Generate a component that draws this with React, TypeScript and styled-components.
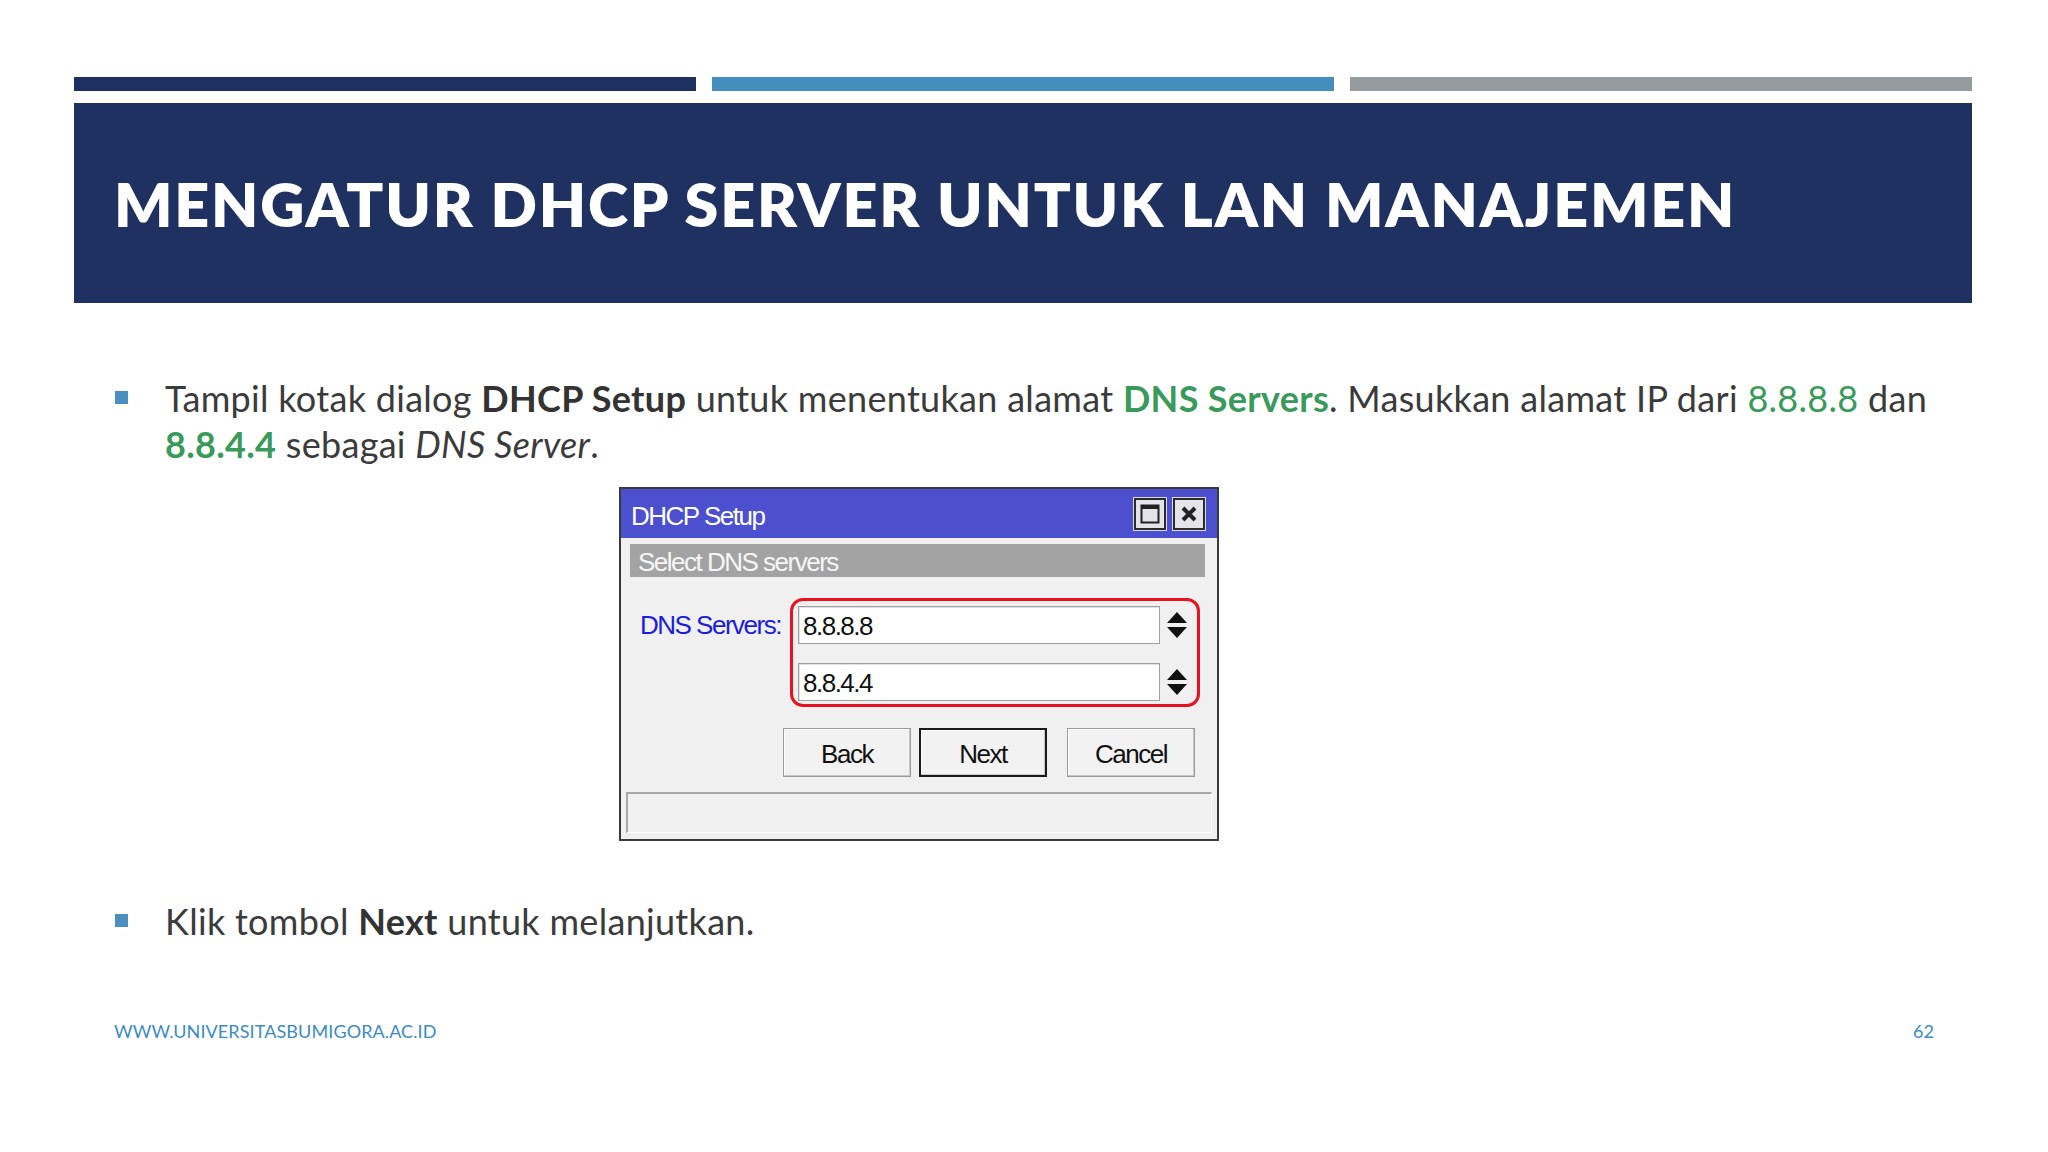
import React from 'react';
import styled, { createGlobalStyle } from 'styled-components';

const GlobalStyle = createGlobalStyle`
    html, body {
        margin: 0;
        padding: 0;
        background: #ffffff;
    }
    body {
        font-family: 'Lato', 'Open Sans', sans-serif;
    }
`;

const Slide = styled.div`
    width: 2048px;
    height: 1152px;
    box-sizing: border-box;
    padding: 77px 76px 0 74px;
    background: #ffffff;
    overflow: hidden;
`;

const AccentBars = styled.div`
    display: grid;
    grid-template-columns: 1fr 1fr 1fr;
    column-gap: 16px;
`;

const AccentBar = styled.div<{ $color: string }>`
    height: 14px;
    background: ${p => p.$color};
`;

const Header = styled.header`
    margin-top: 12px;
    height: 200px;
    background: #1e3160;
    display: flex;
    align-items: center;
    padding-left: 40px;

    h1 {
        margin: 0;
        color: #ffffff;
        font-family: 'Lato', sans-serif;
        font-weight: 800;
        font-size: 61px;
        letter-spacing: 1.8px;
        line-height: 1;
        white-space: nowrap;
    }
`;

const Content = styled.div`
    margin-top: 72px;
    padding-left: 41px;
`;

const Bullet = styled.div<{ $gap?: number }>`
    display: grid;
    grid-template-columns: 50px 1fr;
    margin-top: ${p => p.$gap || 0}px;
    font-size: 36px;
    line-height: 46px;
    letter-spacing: 0.3px;
    color: #3b3b3b;

    &::before {
        content: '';
        width: 13px;
        height: 13px;
        margin-top: 16px;
        background: #4a8fc0;
    }

    p {
        margin: 0;
        max-width: 1800px;
    }

    b {
        font-weight: 700;
        color: #333333;
    }
`;

const Green = styled.span<{ $bold?: boolean }>`
    color: #3a9a5c;
    font-weight: ${p => (p.$bold ? 700 : 400)};
`;

const Dialog = styled.div`
    margin: 20px 0 0 504px;
    width: 600px;
    border: 2px solid #3a3a3a;
    background: #f0f0f0;
    font-family: 'Liberation Sans', Arial, sans-serif;
    font-size: 26px;
    letter-spacing: -1.5px;
    box-sizing: border-box;
    white-space: nowrap;
`;

const TitleBar = styled.div`
    height: 49px;
    background: #4c4fce;
    display: flex;
    align-items: center;
    justify-content: space-between;
    padding: 0 12px 0 10px;
    color: #ffffff;

    span {
        padding-top: 5px;
    }
`;

const WinButtons = styled.div`
    display: flex;
    gap: 7px;
`;

const WinButton = styled.div`
    width: 28px;
    height: 28px;
    background: #e4e4e8;
    border: 2px solid #2b2b2b;
    box-shadow: 0 0 0 1px #d8d8ff;
    display: flex;
    align-items: center;
    justify-content: center;
`;

const Body = styled.div`
    padding: 6px 5px 6px 5px;
`;

const SectionBar = styled.div`
    margin: 0 7px 0 4px;
    height: 33px;
    background: #a3a3a3;
    color: #f6f6f6;
    line-height: 37px;
    padding-left: 8px;
`;

const FieldRow = styled.div`
    margin-top: 21px;
    display: flex;
    padding-left: 14px;
`;

const FieldLabel = styled.div`
    width: 150px;
    color: #1c1ce0;
    line-height: 38px;
    margin-top: 8px;
`;

const Highlight = styled.div`
    width: 410px;
    box-sizing: border-box;
    border: 3px solid #e8121e;
    border-radius: 13px;
    padding: 5px 4px 3px 5px;
    display: grid;
    row-gap: 19px;
`;

const InputRow = styled.div`
    display: flex;
    align-items: center;
`;

const TextBox = styled.div`
    width: 362px;
    height: 38px;
    box-sizing: border-box;
    background: #ffffff;
    border: 1px solid #a0a0a0;
    box-shadow: inset 1px 1px 0 #e2e2e2;
    line-height: 38px;
    padding-left: 4px;
    color: #111111;
`;

const Spinner = styled.svg`
    margin-left: 6px;
`;

const ButtonRow = styled.div`
    margin-top: 21px;
    display: flex;
    justify-content: flex-end;
    padding-right: 17px;
`;

const DialogButton = styled.div<{ $default?: boolean; $spaced?: boolean }>`
    width: 128px;
    height: 49px;
    box-sizing: border-box;
    margin-left: ${p => (p.$spaced ? 20 : 8)}px;
    background: #f2f2f2;
    border: ${p => (p.$default ? '2px solid #1a1a1a' : '1px solid #9a9a9a')};
    box-shadow: inset -1px -1px 0 #c8c8c8, inset 1px 1px 0 #ffffff;
    display: flex;
    align-items: center;
    justify-content: center;
    padding-top: 3px;
    color: #111111;
`;

const StatusBar = styled.div`
    margin-top: 15px;
    height: 41px;
    box-sizing: border-box;
    border-top: 2px solid #a8a8a8;
    border-left: 2px solid #a8a8a8;
    border-bottom: 1px solid #ffffff;
    border-right: 1px solid #ffffff;
    background: #f0f0f0;
`;

const Footer = styled.footer`
    margin-top: 77px;
    display: flex;
    justify-content: space-between;
    padding: 0 38px 0 40px;
    color: #3d8cc0;
    font-size: 18px;
    letter-spacing: 0.1px;
    line-height: 20px;
`;

const SpinArrows = () => (
    <Spinner width="22" height="28" viewBox="0 0 22 28">
        <path d="M11 1 L21 12 L1 12 Z" fill="#111" />
        <path d="M1 16 L21 16 L11 27 Z" fill="#111" />
    </Spinner>
);

export default function App() {
    return (
        <>
            <GlobalStyle />
            <Slide>
                <AccentBars>
                    <AccentBar $color="#1c3160" />
                    <AccentBar $color="#448ebd" />
                    <AccentBar $color="#959ca0" />
                </AccentBars>
                <Header>
                    <h1>MENGATUR DHCP SERVER UNTUK LAN MANAJEMEN</h1>
                </Header>
                <Content>
                    <Bullet>
                        <p>
                            Tampil kotak dialog <b>DHCP Setup</b> untuk menentukan alamat{' '}
                            <Green $bold>DNS Servers</Green>. Masukkan alamat IP dari{' '}
                            <Green>8.8.8.8</Green> dan <Green $bold>8.8.4.4</Green> sebagai{' '}
                            <i>DNS Server</i>.
                        </p>
                    </Bullet>
                    <Dialog>
                        <TitleBar>
                            <span>DHCP Setup</span>
                            <WinButtons>
                                <WinButton>
                                    <svg width="20" height="20" viewBox="0 0 20 20">
                                        <rect x="1.5" y="1.5" width="17" height="17" fill="#e4e4e8" stroke="#222" strokeWidth="2" />
                                        <rect x="1" y="1" width="18" height="4" fill="#222" />
                                    </svg>
                                </WinButton>
                                <WinButton>
                                    <svg width="18" height="18" viewBox="0 0 18 18">
                                        <path d="M3 3 L15 15 M15 3 L3 15" stroke="#222" strokeWidth="4" />
                                    </svg>
                                </WinButton>
                            </WinButtons>
                        </TitleBar>
                        <Body>
                            <SectionBar>Select DNS servers</SectionBar>
                            <FieldRow>
                                <FieldLabel>DNS Servers:</FieldLabel>
                                <Highlight>
                                    <InputRow>
                                        <TextBox>8.8.8.8</TextBox>
                                        <SpinArrows />
                                    </InputRow>
                                    <InputRow>
                                        <TextBox>8.8.4.4</TextBox>
                                        <SpinArrows />
                                    </InputRow>
                                </Highlight>
                            </FieldRow>
                            <ButtonRow>
                                <DialogButton>Back</DialogButton>
                                <DialogButton $default>Next</DialogButton>
                                <DialogButton $spaced>Cancel</DialogButton>
                            </ButtonRow>
                            <StatusBar />
                        </Body>
                    </Dialog>
                    <Bullet $gap={57}>
                        <p>
                            Klik tombol <b>Next</b> untuk melanjutkan.
                        </p>
                    </Bullet>
                </Content>
                <Footer>
                    <span>WWW.UNIVERSITASBUMIGORA.AC.ID</span>
                    <span>62</span>
                </Footer>
            </Slide>
        </>
    );
}
